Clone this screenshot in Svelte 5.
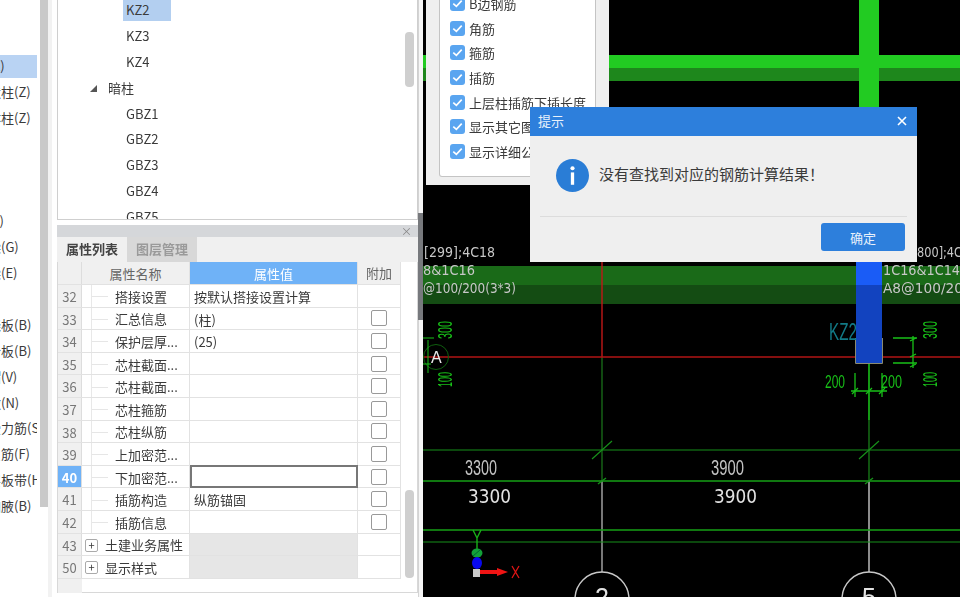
<script lang="ts">
  const sideRows = [
    '柱(Z)', '构造柱(Z)', '砌体柱(Z)', '', '', '', '梁(L)', '连梁(G)', '圈梁(E)', '',
    '现浇板(B)', '叠合板(B)', '柱帽(V)', '柱墩(N)', '板受力筋(S)', '板负筋(F)', '楼层板带(H)', '板加腋(B)'
  ];

  const tree = [
    { text: 'KZ2', level: 2, selected: true },
    { text: 'KZ3', level: 2 },
    { text: 'KZ4', level: 2 },
    { text: '暗柱', level: 1, open: true },
    { text: 'GBZ1', level: 2 },
    { text: 'GBZ2', level: 2 },
    { text: 'GBZ3', level: 2 },
    { text: 'GBZ4', level: 2 },
    { text: 'GBZ5', level: 2 }
  ];

  const props = [
    { n: 32, name: '搭接设置', value: '按默认搭接设置计算', nocheck: true },
    { n: 33, name: '汇总信息', value: '(柱)' },
    { n: 34, name: '保护层厚...', value: '(25)' },
    { n: 35, name: '芯柱截面...', value: '' },
    { n: 36, name: '芯柱截面...', value: '' },
    { n: 37, name: '芯柱箍筋', value: '' },
    { n: 38, name: '芯柱纵筋', value: '' },
    { n: 39, name: '上加密范...', value: '' },
    { n: 40, name: '下加密范...', value: '', active: true },
    { n: 41, name: '插筋构造', value: '纵筋锚固' },
    { n: 42, name: '插筋信息', value: '' },
    { n: 43, name: '土建业务属性', group: true },
    { n: 50, name: '显示样式', group: true }
  ];

  const checks = ['B边钢筋', '角筋', '箍筋', '插筋', '上层柱插筋下插长度', '显示其它图元', '显示详细公式'];
</script>

<div class="app">
  <aside class="side">
    <div class="side-list">
      {#each sideRows as row, i}
        <div class="side-row" class:on={i === 0}><span>{row}</span></div>
      {/each}
    </div>
    <div class="side-bar"></div>
  </aside>

  <section class="mid">
    <div class="tree">
      <div class="tree-list">
        {#each tree as item}
          <div class="tree-row" class:lvl1={item.level === 1}>
            {#if item.open}<span class="tri"></span>{/if}
            <span class="tree-text" class:sel={item.selected}>{item.text}</span>
          </div>
        {/each}
      </div>
      <div class="thumb tree-thumb"></div>
    </div>

    <div class="props">
      <div class="props-head"><span>×</span></div>
      <div class="tabs">
        <div class="tab on">属性列表</div>
        <div class="tab">图层管理</div>
      </div>
      <div class="table-wrap">
        <div class="table">
          <div class="row head">
            <div class="c-num"></div>
            <div class="c-name">属性名称</div>
            <div class="c-val">属性值</div>
            <div class="c-add">附加</div>
          </div>
          {#each props as p}
            <div class="row" class:group={p.group}>
              <div class="c-num" class:hot={p.active}>{p.n}</div>
              <div class="c-name">
                {#if p.group}
                  <span class="plus">+</span>
                {:else}
                  <span class="branch"></span>
                {/if}
                <span class="clip">{p.name}</span>
              </div>
              <div class="c-val" class:edit={p.active}>{p.value ?? ''}</div>
              <div class="c-add">
                {#if !p.group && !p.nocheck}<span class="box"></span>{/if}
              </div>
            </div>
          {/each}
          <div class="tail"><div class="tail-num"></div></div>
        </div>
        <div class="thumb props-thumb"></div>
      </div>
    </div>
  </section>

  <div class="splitter"><div class="split-dark"></div></div>

  <main class="canvas">
    <svg viewBox="423 0 537 597" width="537" height="597">
      <rect x="423" y="55" width="537" height="13" fill="#22cb22" />
      <rect x="423" y="68" width="537" height="13" fill="#1e871c" />
      <rect x="859" y="0" width="20" height="110" fill="#22cb22" />

      <rect x="423" y="266" width="537" height="19" fill="#1a6a18" />
      <rect x="423" y="285" width="537" height="19" fill="#144c13" />

      <g fill="#c8c8c8" font-family="'DejaVu Sans', sans-serif" font-size="14.5">
        <text x="424" y="257" textLength="71" lengthAdjust="spacingAndGlyphs">[299];4C18</text>
        <text x="423" y="275" textLength="52" lengthAdjust="spacingAndGlyphs">8&amp;1C16</text>
        <text x="423" y="293" textLength="93" lengthAdjust="spacingAndGlyphs">@100/200(3*3)</text>
        <text x="917" y="257" textLength="45" lengthAdjust="spacingAndGlyphs">800];4C</text>
        <text x="883" y="275" textLength="77" lengthAdjust="spacingAndGlyphs">1C16&amp;1C14</text>
        <text x="883" y="293" textLength="80" lengthAdjust="spacingAndGlyphs">A8@100/20</text>
      </g>

      <!-- axis lines -->
      <line x1="602" y1="262" x2="602" y2="357" stroke="#c01818" stroke-width="1.4" />
      <line x1="602" y1="357" x2="602" y2="481" stroke="#1c7a1c" stroke-width="1.2" />
      <line x1="602" y1="481" x2="602" y2="573" stroke="#c8c8c8" stroke-width="1.2" />
      <line x1="869" y1="364" x2="869" y2="481" stroke="#1c8a1c" stroke-width="1.2" />
      <line x1="869" y1="481" x2="869" y2="573" stroke="#b0b0b0" stroke-width="1.6" />
      <line x1="423" y1="357" x2="960" y2="357" stroke="#b01414" stroke-width="1.6" />

      <g stroke="#17901a" fill="none">
        <line x1="423" y1="450" x2="960" y2="450" stroke-width="1.2" />
        <line x1="423" y1="481" x2="960" y2="481" stroke="#16a016" stroke-width="1.6" />
        <line x1="423" y1="530" x2="960" y2="530" stroke="#16a016" stroke-width="1.4" />
        <line x1="423" y1="542" x2="960" y2="542" stroke-width="1.2" />
        <line x1="592" y1="459" x2="612" y2="441" stroke-width="1.2" />
        <line x1="859" y1="459" x2="879" y2="441" stroke-width="1.2" />
        <line x1="598" y1="484" x2="606" y2="478" stroke-width="1.4" />
        <line x1="865" y1="484" x2="873" y2="478" stroke-width="1.4" />
      </g>

      <rect x="856" y="262" width="26" height="23" fill="#1a5cf6" />
      <rect x="856" y="285" width="26" height="79" fill="#1243bf" />
      <path d="M855.5 338V363.5H882.5V338" fill="none" stroke="#8a8a70" />

      <text x="829" y="340" fill="#127a86" font-family="'Liberation Sans', sans-serif" font-size="24" textLength="28" lengthAdjust="spacingAndGlyphs">KZ2</text>

      <!-- dimensions right of the column -->
      <g stroke="#18c018" fill="none" stroke-width="1.3">
        <path d="M893 338H917M893 363H917M913 336V368" />
        <path d="M910 341l6 -3M910 357l6 -3M910 367l6 -3" />
        <path d="M855 373V397M869 364V420M882 373V397M851 391H887" />
        <path d="M852 394l6 -6M866 394l6 -6M879 394l6 -6" />
      </g>
      <g fill="#18c018" font-family="'Liberation Sans', sans-serif">
        <text x="825" y="388" font-size="18" textLength="20" lengthAdjust="spacingAndGlyphs">200</text>
        <text x="881" y="388" font-size="18" textLength="21" lengthAdjust="spacingAndGlyphs">200</text>
        <text transform="translate(937 339) rotate(-90)" font-size="20" textLength="18" lengthAdjust="spacingAndGlyphs">300</text>
        <text transform="translate(937 387) rotate(-90)" font-size="20" textLength="15" lengthAdjust="spacingAndGlyphs">100</text>
        <text transform="translate(452 339) rotate(-90)" font-size="20" textLength="18" lengthAdjust="spacingAndGlyphs">300</text>
        <text transform="translate(452 387) rotate(-90)" font-size="20" textLength="15" lengthAdjust="spacingAndGlyphs">100</text>
      </g>

      <!-- grid bubble A -->
      <circle cx="436" cy="357" r="12.5" fill="none" stroke="#0f5f0f" />
      <path d="M423 338H434M428 340V373M423 364H431" stroke="#18c018" fill="none" />
      <text x="431" y="363" fill="#e8e8e8" font-family="'Liberation Sans', sans-serif" font-size="16">A</text>

      <!-- span dimensions -->
      <g font-family="'Liberation Sans', sans-serif" fill="#c4c4c4" font-size="22">
        <text x="465" y="475" textLength="32" lengthAdjust="spacingAndGlyphs">3300</text>
        <text x="711" y="475" textLength="33" lengthAdjust="spacingAndGlyphs">3900</text>
      </g>
      <g font-family="'DejaVu Sans', sans-serif" fill="#e2e2e2" font-size="20">
        <text x="468" y="503" textLength="43" lengthAdjust="spacingAndGlyphs">3300</text>
        <text x="714" y="503" textLength="43" lengthAdjust="spacingAndGlyphs">3900</text>
      </g>

      <!-- grid bubbles -->
      <circle cx="602" cy="599" r="27" fill="#000" stroke="#c8c8c8" stroke-width="1.4" />
      <circle cx="869" cy="599" r="27" fill="#000" stroke="#c8c8c8" stroke-width="1.4" />
      <g font-family="'Liberation Sans', sans-serif" fill="#e2e2e2" font-size="25">
        <text x="595" y="606">2</text>
        <text x="862" y="606">5</text>
      </g>

      <!-- coordinate gizmo -->
      <path d="M473 530L477 538L481 530M477 538V549" stroke="#18b018" stroke-width="1.4" fill="none" />
      <ellipse cx="477" cy="553" rx="5.5" ry="4.5" fill="#12a038" />
      <path d="M473 556L480 550" stroke="#063" stroke-width="1" />
      <ellipse cx="477" cy="563" rx="5" ry="6" fill="#0808f0" />
      <rect x="473" y="569" width="7" height="8" fill="#c8c8c8" />
      <path d="M480 570H497V568L508 572L497 576V574H480Z" fill="#f01414" />
      <path d="M512 566L519 578M519 566L512 578" stroke="#e01414" stroke-width="1.3" fill="none" />
    </svg>

    <div class="float">
      <div class="float-inner">
        {#each checks as c}
          <div class="check">
            <span class="tick">
              <svg viewBox="0 0 16 16" width="15" height="15"><path d="M3.5 8.2L6.8 11L12.5 5" fill="none" stroke="#fff" stroke-width="1.8" /></svg>
            </span>
            <span>{c}</span>
          </div>
        {/each}
      </div>
    </div>

    <div class="dialog">
      <div class="dlg-title">
        <span>提示</span>
        <svg viewBox="0 0 10 10" width="10" height="10"><path d="M1 1L9 9M9 1L1 9" stroke="#fff" stroke-width="1.6" /></svg>
      </div>
      <div class="dlg-body">
        <svg class="info" viewBox="0 0 32 32" width="33" height="33">
          <circle cx="16" cy="16" r="16" fill="#2a7dd6" />
          <circle cx="16" cy="9" r="2" fill="#fff" />
          <rect x="14.4" y="13" width="3.2" height="12" fill="#fff" />
        </svg>
        <span class="msg">没有查找到对应的钢筋计算结果！</span>
      </div>
      <div class="dlg-foot"><button>确定</button></div>
    </div>
  </main>
</div>

<style>
  :global(body) {
    margin: 0;
    background: #fff;
    font-family: "Noto Sans CJK SC", "Noto Sans", sans-serif;
  }
  .app {
    display: flex;
    width: 960px;
    height: 597px;
    overflow: hidden;
    font-size: 13px;
    color: #3a3a3a;
    filter: blur(0.5px);
  }

  .side { width: 52px; display: flex; flex: none; background: #fff; }
  .side-list { width: 37px; margin-right: 3px; padding-top: 53px; overflow: hidden; }
  .side-row { height: 25.9px; line-height: 25.9px; white-space: nowrap; overflow: hidden; }
  .side-row span { display: block; margin-left: -25px; }
  .side-row.on { background: linear-gradient(#b9d3f3, #b9d3f3) no-repeat 0 2px / 100% 23px; }
  .side-bar { width: 8px; height: 507px; background: #c9c9c9; }
  .side::after { content: ""; width: 4px; background: #f2f2f2; }

  .mid { width: 366px; flex: none; padding-left: 5px; box-sizing: border-box; background: #fff; display: flex; flex-direction: column; }
  .tree {
    height: 220px;
    flex: none;
    box-sizing: border-box;
    border: 1px solid #cfcfcf;
    border-top: 0;
    background: #fff;
    overflow: hidden;
    display: flex;
  }
  .tree-list { flex: 1; margin-top: -3px; }
  .tree-row { height: 25.9px; padding-left: 65px; display: flex; align-items: center; position: relative; }
  .tree-row.lvl1 { padding-left: 47px; }
  .tree-text { padding: 0 3px; line-height: 25.9px; height: 25.9px; }
  .tree-text.sel { background: linear-gradient(#b3cff0, #b3cff0) no-repeat 0 0 / 100% 24px; padding-right: 22px; }
  .tri { position: absolute; left: 32px; top: 10px; width: 0; height: 0; border-left: 7px solid transparent; border-bottom: 7px solid #555; }
  .thumb { width: 9px; background: #cfcfcf; border-radius: 4px; flex: none; }
  .tree-thumb { height: 55px; margin: 32px 3px 0 0; }

  .props { margin-top: 5px; flex: 1; display: flex; flex-direction: column; }
  .props-head { height: 12px; background: #d5d7da; text-align: right; padding-right: 6px; color: #888; font-size: 11px; line-height: 12px; }
  .tabs { display: flex; height: 25px; background: #f0f0f0; }
  .tab { width: 70px; text-align: center; line-height: 23px; background: #d8d8d8; color: #9a9a9a; font-weight: 700; }
  .tab.on { background: #f0f0f0; color: #444; }

  .table-wrap { display: flex; height: 331px; border: 1px solid #d8d8d8; border-top: 0; background: #fff; box-sizing: border-box; }
  .table { width: 343px; flex: none; }
  .row { display: flex; height: 22.6px; line-height: 24px; box-sizing: border-box; border-bottom: 1px solid #e2e2e2; }
  .row.head { height: 23px; }
  .c-num { width: 24px; flex: none; background: #f0f0f0; text-align: center; color: #777; box-sizing: border-box; border-right: 1px solid #ddd; }
  .c-num.hot { background: #6fb2f7; color: #fff; font-weight: 700; }
  .c-name { width: 108px; flex: none; box-sizing: border-box; padding-top: 2px; border-right: 1px solid #e2e2e2; display: flex; align-items: center; white-space: nowrap; position: relative; }
  .branch { width: 16px; height: 1px; background: #e6e6e6; margin: 0 7px 0 10px; flex: none; }
  .branch::before { content: ""; position: absolute; left: 9px; top: 0; bottom: 0; width: 1px; background: #e8e8e8; }
  .clip { overflow: hidden; }
  .plus { width: 11px; height: 11px; line-height: 10px; border: 1px solid #aaa; border-radius: 2px; text-align: center; margin: 0 7px 0 3px; font-size: 11px; flex: none; }
  .c-val { width: 168px; flex: none; padding-left: 4px; box-sizing: border-box; border-right: 1px solid #e2e2e2; white-space: nowrap; }
  .c-val.edit { border: 2px solid #777; height: 23px; margin-top: -1px; }
  .c-add { width: 43px; flex: none; display: flex; align-items: center; justify-content: center; box-sizing: border-box; border-right: 1px solid #e2e2e2; }
  .box { width: 14px; height: 14px; border: 1px solid #999; border-radius: 2px; background: #fff; }

  .head .c-num, .head .c-name, .head .c-add { background: #f0f0f0; color: #666; justify-content: center; text-align: center; }
  .head .c-val { background: #6fb2f7; color: #fff; text-align: center; padding: 0; }
  .group .c-val { background: #e6e6e6; }
  .tail { height: 14px; }
  .tail-num { width: 24px; height: 100%; background: #f0f0f0; }
  .props-thumb { height: 88px; margin: 228px 0 0 4px; }

  .splitter { width: 5px; flex: none; background: #f6f6f6; border-left: 1px solid #d4d4d4; box-sizing: border-box; padding-top: 213px; }
  .split-dark { height: 107px; background: #77797d; margin-left: -1px; }

  .canvas { width: 537px; flex: none; height: 597px; background: #000; position: relative; overflow: hidden; }
  .canvas > svg { display: block; }

  .float { position: absolute; left: 3px; top: -14px; width: 183px; height: 199px; background: #efefef; box-sizing: border-box; padding: 0 13px 8px; }
  .float-inner { height: 191px; background: #fff; border: 1px solid #c4c4c4; border-top: 0; border-radius: 0 0 3px 3px; box-sizing: border-box; padding: 5px 0 0 10px; }
  .check { height: 24.7px; display: flex; align-items: center; gap: 4px; white-space: nowrap; }
  .tick { width: 15px; height: 15px; background: #5aa5f0; border-radius: 3px; flex: none; display: block; }
  .tick svg { display: block; }

  .dialog { position: absolute; left: 107px; top: 107px; width: 387px; height: 155px; background: #efefef; display: flex; flex-direction: column; }
  .dlg-title { height: 29px; flex: none; box-sizing: border-box; padding: 0 10px 2px 8px; background: #2d7fdc; color: #e8f1fb; display: flex; align-items: center; justify-content: space-between; }
  .dlg-body { flex: 1; margin: 0 10px; display: flex; align-items: center; gap: 10px; padding: 0 0 4px 16px; font-size: 15px; border-bottom: 1px solid #dcdcdc; box-sizing: border-box; }
  .info { flex: none; margin-top: 2px; }
  .msg { margin-bottom: 2px; }
  .dlg-foot { height: 45px; flex: none; display: flex; justify-content: flex-end; padding: 6px 12px 0 0; box-sizing: border-box; }
  button { width: 84px; height: 28px; background: #2d7fdc; color: #e8f1fb; border: 0; border-radius: 3px; font: inherit; font-size: 13px; padding: 0; }
</style>
